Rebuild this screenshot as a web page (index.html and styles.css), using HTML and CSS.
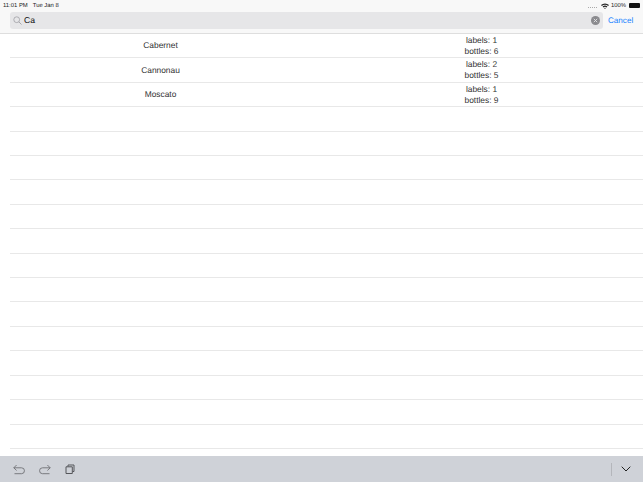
FILE: index.html
```html
<!DOCTYPE html>
<html lang="en">
<head>
<meta charset="utf-8">
<title>Search</title>
<link rel="stylesheet" href="styles.css">
</head>
<body>
<div class="app">
  <header class="top">
    <div class="status">
      <div class="status-left"><span>11:01 PM</span><span>Tue Jan 8</span></div>
      <div class="status-right">
        <span class="dots"></span>
        <svg class="wifi" width="8" height="6" viewBox="0 0 8 6"><path d="M0 2.1A5.6 5.6 0 0 1 8 2.1L7.1 3A4.4 4.4 0 0 0 .9 3ZM1.6 3.6A3.4 3.4 0 0 1 6.4 3.6L5.5 4.5A2.1 2.1 0 0 0 2.5 4.5ZM3.1 5.1A1.3 1.3 0 0 1 4.9 5.1L4 6Z" fill="#222"/></svg>
        <span>100%</span>
        <span class="battery"></span>
      </div>
    </div>
    <div class="searchbar">
      <div class="field">
        <svg class="glass" width="9" height="9" viewBox="0 0 9 9"><circle cx="3.7" cy="3.7" r="2.9" fill="none" stroke="#a0a0a5" stroke-width=".8"/><path d="M5.8 5.8L8.5 8.5" stroke="#a0a0a5" stroke-width=".9"/></svg>
        <span class="query">Ca</span>
        <svg class="clear" width="9" height="9" viewBox="0 0 9 9"><circle cx="4.5" cy="4.5" r="4.5" fill="#8a8a8e"/><path d="M2.8 2.8L6.2 6.2M6.2 2.8L2.8 6.2" stroke="#e4e4e6" stroke-width=".9"/></svg>
      </div>
      <span class="cancel">Cancel</span>
    </div>
  </header>
  <main class="list">
    <div class="row"><div class="name">Cabernet</div><div class="stats">labels: 1<br>bottles: 6</div></div>
    <div class="row"><div class="name">Cannonau</div><div class="stats">labels: 2<br>bottles: 5</div></div>
    <div class="row"><div class="name">Moscato</div><div class="stats">labels: 1<br>bottles: 9</div></div>
    <div class="row"></div><div class="row"></div><div class="row"></div><div class="row"></div>
    <div class="row"></div><div class="row"></div><div class="row"></div><div class="row"></div>
    <div class="row"></div><div class="row"></div><div class="row"></div><div class="row"></div>
    <div class="row"></div><div class="row"></div>
  </main>
  <footer class="keys">
    <div class="keys-left">
      <svg width="12" height="11" viewBox="0 0 12 11"><path d="M3.6 1L.8 3.8L3.6 6.5M.8 3.8H8.5A2.7 2.7 0 0 1 8.5 9.7H1.5" fill="none" stroke="#6f7075" stroke-width=".9"/></svg>
      <svg width="12" height="11" viewBox="0 0 12 11"><path d="M8.4 1L11.2 3.8L8.4 6.5M11.2 3.8H3.5A2.7 2.7 0 0 0 3.5 9.7H10.5" fill="none" stroke="#6f7075" stroke-width=".9"/></svg>
      <svg width="10" height="11" viewBox="0 0 10 11"><path d="M3 2.5V1H9V7.5H7.5M1 2.8H7.3V9.5H1Z" fill="none" stroke="#55565a" stroke-width="1"/></svg>
    </div>
    <div class="keys-right">
      <span class="divider"></span>
      <svg width="10" height="6" viewBox="0 0 10 6"><path d="M.7 .7L5 5L9.3 .7" fill="none" stroke="#222" stroke-width="1"/></svg>
    </div>
  </footer>
</div>
</body>
</html>
```
FILE: styles.css
```css
* { box-sizing: border-box; }
html, body { margin: 0; padding: 0; }
body { width: 643px; height: 482px; overflow: hidden; background: #fff; color: #111; font-family: "Liberation Sans", Arial, sans-serif; text-rendering: geometricPrecision; }
.app { display: flex; flex-direction: column; height: 482px; }
.top { height: 34px; flex: none; background: #f8f8f8; border-bottom: 1px solid #dedede; display: flex; flex-direction: column; }
.status { height: 11px; margin-bottom: 1px; flex: none; padding: 0 3px; display: flex; justify-content: space-between; align-items: center; font-size: 5.9px; color: #222; }
.status-left { display: flex; gap: 5px; }
.status-right { display: flex; align-items: center; gap: 2px; }
.dots { width: 9px; height: 1px; margin-right: 2px; margin-top: 3px; border-top: 1px dotted #aaa; }
.battery { width: 11px; height: 5px; margin-left: 1px; background: #111; border-radius: 1px; }
.searchbar { display: flex; align-items: center; padding: 0 10px; gap: 5px; height: 17px; }
.field { flex: 1; height: 17px; border-radius: 3px; background: #e6e6e8; display: flex; align-items: center; padding: 0 3px; }
.glass { flex: none; margin-right: 2px; }
.query { flex: 1; font-size: 8.6px; line-height: 15px; padding-bottom: 1px; color: #111; }
.cancel { width: 25px; font-size: 8.1px; line-height: 15px; padding-bottom: 1px; color: #1a84ff; white-space: nowrap; }
.list { flex: 1; padding-left: 10px; min-height: 0; overflow: hidden; }
.row { height: 24.42px; border-bottom: 1px solid #e8e8e8; display: grid; grid-template-columns: 301px 1fr; align-items: center; text-align: center; font-size: 8.4px; line-height: 11px; color: #333; }
.name { padding-top: 0; }
.stats { padding-left: 9px; }
.keys { height: 26px; flex: none; background: #cfd2d8; display: flex; justify-content: space-between; align-items: center; padding: 0 12px 0 13px; }
.keys-left { display: flex; align-items: center; gap: 14px; }
.keys-right { display: flex; align-items: center; gap: 9px; }
.divider { width: 1px; height: 13px; background: #b4b6bb; }
```
